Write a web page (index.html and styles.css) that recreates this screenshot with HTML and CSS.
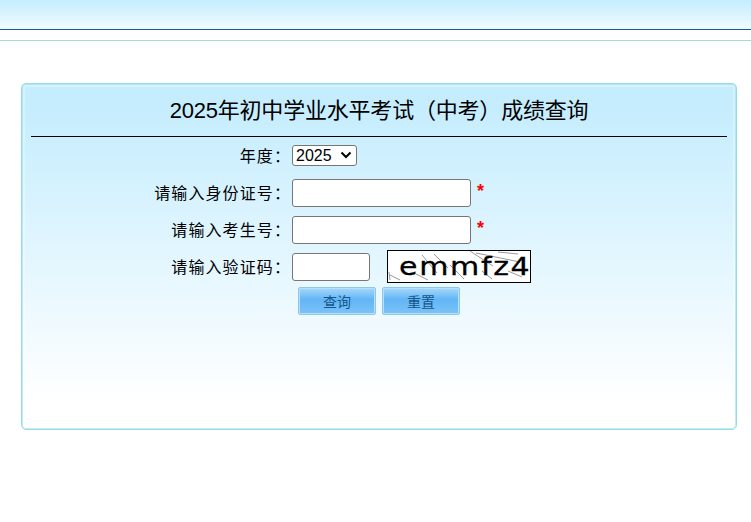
FILE: index.html
```html
<!DOCTYPE html>
<html lang="zh-CN">
<head>
    <meta charset="UTF-8">
    <title>成绩查询</title>
    <link rel="stylesheet" href="styles.css">
</head>
<body>
    <div class="top-bar"></div>
    <div class="top-rule"></div>

    <div class="panel">
        <h1 class="panel-title">2025年初中学业水平考试（中考）成绩查询</h1>
        <form class="query-form">
            <label class="field-label year-label">年度：</label>
            <div class="field year-field">
                <select class="year-select">
                    <option>2025</option>
                </select>
            </div>

            <label class="field-label">请输入身份证号：</label>
            <div class="field">
                <input class="text-input" type="text">
                <span class="required">*</span>
            </div>

            <label class="field-label">请输入考生号：</label>
            <div class="field">
                <input class="text-input" type="text">
                <span class="required">*</span>
            </div>

            <label class="field-label">请输入验证码：</label>
            <div class="field">
                <input class="text-input code-input" type="text">
                <!-- captcha picture -->
                <div class="captcha">
                    <svg class="captcha-noise" width="142" height="31" viewBox="0 0 142 31">
                        <path d="M34 4l15 18M46 3l14 14M82 0l23 15M88 2l44 9M110 1l20 2M62 14l14 14M94 20l10 8M120 20l14 6M2 24l10 5M28 23l12 6M1 21l1 8" stroke="#999" stroke-width="1" fill="none"/>
                    </svg>
                    <span class="captcha-text">emmfz4</span>
                </div>
            </div>

            <div></div>
            <div class="form-buttons">
                <button class="btn" type="button">查询</button>
                <button class="btn" type="button">重置</button>
            </div>
        </form>
    </div>
</body>
</html>
```

FILE: styles.css
```css
/* General Styling */
body {
    margin: 0;
    background-color: #fff;
    font-family: "Liberation Sans", "Noto Sans CJK SC", sans-serif;
    color: #000;
}

.top-bar {
    height: 29px;
    background: linear-gradient(#c5edfe, #f0fbff);
    border-bottom: 1px solid #1c5a8a;
}

.top-rule {
    height: 10px;
    border-bottom: 1px solid #a8dcd2;
}

/* Panel */
.panel {
    box-sizing: border-box;
    width: 716px;
    height: 347px;
    margin: 42px 0 0 21px;
    padding: 1px 9px 0;
    background: linear-gradient(#c5edfe 6%, #fff 92%);
    border: 1px solid #96dce8;
    border-radius: 5px;
    box-shadow: inset 0 0 0 1px rgba(150, 220, 232, 0.55), inset 0 0 0 3px rgba(255, 255, 255, 0.3);
}

.panel-title {
    margin: 0;
    height: 51px;
    line-height: 51px;
    font-size: 22px;
    font-weight: normal;
    letter-spacing: -0.2px;
    text-align: center;
    border-bottom: 1px solid #000;
}

/* Form */
.query-form {
    display: grid;
    grid-template-columns: 260px 1fr;
    column-gap: 1px;
    align-items: center;
    padding-top: 6px;
}

.field-label {
    padding-bottom: 2px;
    font-family: "Noto Sans CJK TC", sans-serif;
    font-size: 16px;
    line-height: 20px;
    letter-spacing: 1.1px;
    text-align: right;
}

.year-label {
    padding-bottom: 8px;
}

.field {
    display: flex;
    align-items: center;
    height: 37px;
}

.year-field {
    height: 24px;
    margin-bottom: 7px;
}

.year-select {
    width: 65px;
    height: 21px;
    padding-left: 3px;
    font-family: inherit;
    font-size: 16px;
    appearance: none;
    background: #fff url("data:image/svg+xml,%3Csvg xmlns='http://www.w3.org/2000/svg' width='12' height='8'%3E%3Cpath d='M1.5 1.5L6 6l4.5-4.5' stroke='%23000' stroke-width='2' fill='none'/%3E%3C/svg%3E") no-repeat right 4px center;
    border: 1px solid #767676;
    border-radius: 3px;
}

.text-input {
    box-sizing: border-box;
    width: 179px;
    height: 28px;
    background: #fff;
    border: 1px solid #767676;
    border-radius: 3px;
}

.code-input {
    width: 78px;
}

.required {
    margin-left: 6px;
    margin-bottom: 4px;
    font-size: 18px;
    font-weight: bold;
    line-height: 18px;
    color: #f00;
}

.captcha {
    position: relative;
    box-sizing: border-box;
    width: 144px;
    height: 33px;
    margin-left: 17px;
    overflow: hidden;
    background: #fff;
    border: 1px solid #000;
}

.captcha-noise {
    position: absolute;
    top: 0;
    left: 0;
}

.captcha-text {
    position: absolute;
    top: 1px;
    left: 11px;
    font-family: "DejaVu Sans", sans-serif;
    font-size: 25px;
    line-height: 29px;
    letter-spacing: 1.4px;
    white-space: nowrap;
    -webkit-text-stroke: 0.3px #000;
    transform: scaleX(1.2);
    transform-origin: left center;
}

.form-buttons {
    display: flex;
    gap: 6px;
    margin-top: 2px;
    padding-left: 6px;
}

.btn {
    box-sizing: border-box;
    width: 78px;
    height: 28px;
    padding: 0;
    font-family: inherit;
    font-size: 14px;
    color: #14568a;
    background: linear-gradient(#a5d8fb, #63b5f6 45%, #7cc3f8);
    border: 1px solid #8cc8ea;
    border-radius: 2px;
    box-shadow: inset 0 0 0 1px #b9e0f8;
}
```
